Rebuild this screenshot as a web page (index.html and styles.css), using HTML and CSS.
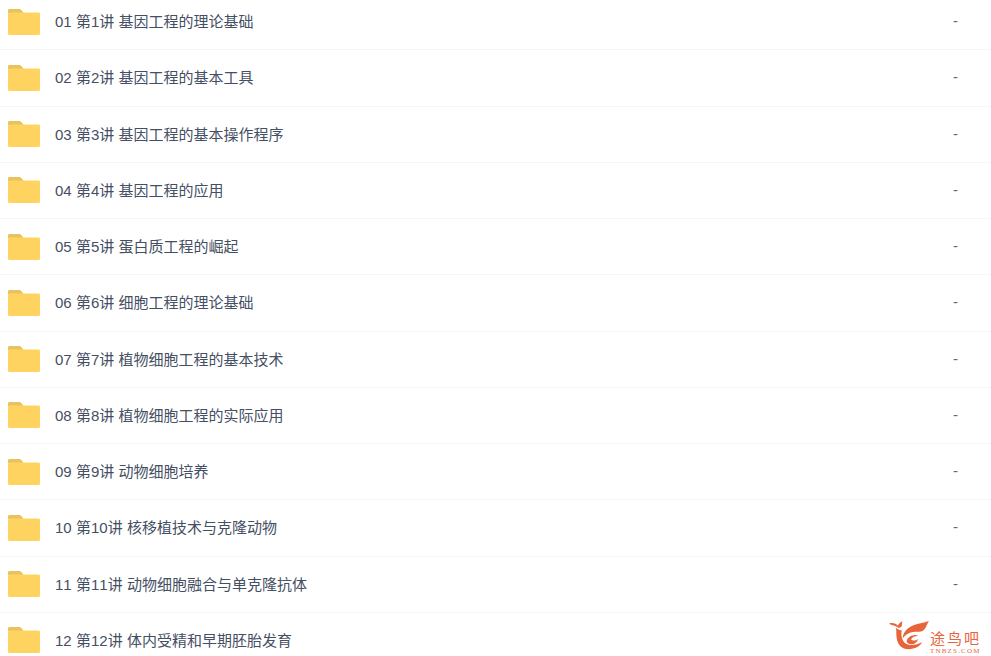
FILE: index.html
```html
<!DOCTYPE html>
<html lang="zh-CN">
<head>
    <meta charset="UTF-8">
    <title>文件列表</title>
    <link rel="stylesheet" href="styles.css">
</head>
<body>
    <svg class="icon-defs" width="0" height="0">
        <symbol id="folder" viewBox="0 0 32 26">
            <path d="M1.500 0H11c1.200 0 2 .6 2.800 1.600L15.500 4H0V1.500C0 .7.700 0 1.500 0z" fill="#e9c25f"/>
            <path d="M0 5C0 4.200.7 3.500 1.500 3.500h29c.8 0 1.500.7 1.500 1.500v19.500c0 .8-.7 1.500-1.500 1.500h-29C.7 26 0 25.300 0 24.500z" fill="#ffd35f"/>
        </symbol>
    </svg>

    <ul class="file-list">
        <li class="file-row"><svg class="folder"><use href="#folder"/></svg><span class="file-name">01 第1讲 基因工程的理论基础</span><span class="file-size">-</span></li>
        <li class="file-row"><svg class="folder"><use href="#folder"/></svg><span class="file-name">02 第2讲 基因工程的基本工具</span><span class="file-size">-</span></li>
        <li class="file-row"><svg class="folder"><use href="#folder"/></svg><span class="file-name">03 第3讲 基因工程的基本操作程序</span><span class="file-size">-</span></li>
        <li class="file-row"><svg class="folder"><use href="#folder"/></svg><span class="file-name">04 第4讲 基因工程的应用</span><span class="file-size">-</span></li>
        <li class="file-row"><svg class="folder"><use href="#folder"/></svg><span class="file-name">05 第5讲 蛋白质工程的崛起</span><span class="file-size">-</span></li>
        <li class="file-row"><svg class="folder"><use href="#folder"/></svg><span class="file-name">06 第6讲 细胞工程的理论基础</span><span class="file-size">-</span></li>
        <li class="file-row"><svg class="folder"><use href="#folder"/></svg><span class="file-name">07 第7讲 植物细胞工程的基本技术</span><span class="file-size">-</span></li>
        <li class="file-row"><svg class="folder"><use href="#folder"/></svg><span class="file-name">08 第8讲 植物细胞工程的实际应用</span><span class="file-size">-</span></li>
        <li class="file-row"><svg class="folder"><use href="#folder"/></svg><span class="file-name">09 第9讲 动物细胞培养</span><span class="file-size">-</span></li>
        <li class="file-row"><svg class="folder"><use href="#folder"/></svg><span class="file-name">10 第10讲 核移植技术与克隆动物</span><span class="file-size">-</span></li>
        <li class="file-row"><svg class="folder"><use href="#folder"/></svg><span class="file-name">11 第11讲 动物细胞融合与单克隆抗体</span><span class="file-size">-</span></li>
        <li class="file-row"><svg class="folder"><use href="#folder"/></svg><span class="file-name">12 第12讲 体内受精和早期胚胎发育</span></li>
    </ul>

    <!-- watermark -->
    <div class="watermark">
        <svg class="watermark-mark" viewBox="0 0 44 32">
            <path d="M1 3.500C5 2.500 8 3.500 10 6C11 3.500 13 1 15 1.500C13.500 3 15 5 13.500 7C12 9 9.500 8 8 6.500C6 5.500 3.500 5.500 1 3.500z" fill="#e8653c"/>
            <path d="M8 8C9 14 7.500 19 11 25C14 30 21 31.500 28 29C32 27.500 34 25 35 23C30 25.500 23 27 18.500 24.500C14 22 13 15 14 10.500C12.500 11 10 10 8 8z" fill="#e8653c"/>
            <path d="M15 19C15 12 21 6 30 4C35 3 39 2 42 1C40 4 40 7 37 10C33 14 28 11 23 13C19 14.500 17 16.500 15 19z" fill="#e8653c"/>
            <path d="M19 22C20 17 25 15 31 15.500C28 17 25 17.500 23.500 20C25 21.500 28 21.500 31 19.500C30 23 27 25 24 25C21.500 25 19.500 24 19 22z" fill="#e8653c"/>
        </svg>
        <div class="watermark-text">
            <span class="watermark-cn">途鸟吧</span>
            <span class="watermark-en">TNBZS.COM</span>
        </div>
    </div>
</body>
</html>
```

FILE: styles.css
```css
html, body {
    height: 100%;
}
body {
    margin: 0;
    background-color: #fff;
    color: #454f63;
    font-family: "Liberation Sans", "Noto Sans CJK SC", sans-serif;
    font-size: 15px;
    font-kerning: none;
    word-spacing: 0.1px;
    overflow: hidden;
}
.icon-defs {
    position: absolute;
}
.file-list {
    list-style: none;
    margin: -6px 0 0;
    padding: 0;
}
.file-row {
    display: flex;
    align-items: center;
    box-sizing: border-box;
    height: 56.25px;
    padding-left: 8px;
    border-bottom: 1px solid #f4f5f7;
}
.folder {
    flex: none;
    width: 32px;
    height: 26px;
}
.file-name {
    flex: 1;
    margin-left: 15px;
    margin-bottom: 2px;
}
.file-size {
    flex: none;
    width: 38px;
    margin-bottom: 2px;
    color: #666;
}
.watermark {
    position: absolute;
    right: 10px;
    bottom: 1px;
    display: flex;
    align-items: flex-end;
    color: #e8653c;
}
.watermark-mark {
    width: 43px;
    height: 31px;
    margin-right: -1px;
    margin-bottom: 4px;
}
.watermark-text {
    display: flex;
    flex-direction: column;
    align-items: flex-start;
}
.watermark-cn {
    font-size: 15px;
    line-height: 17px;
    letter-spacing: 2px;
}
.watermark-en {
    font-family: "Liberation Serif", serif;
    font-size: 7px;
    line-height: 8px;
    letter-spacing: 1.200px;
}
```
